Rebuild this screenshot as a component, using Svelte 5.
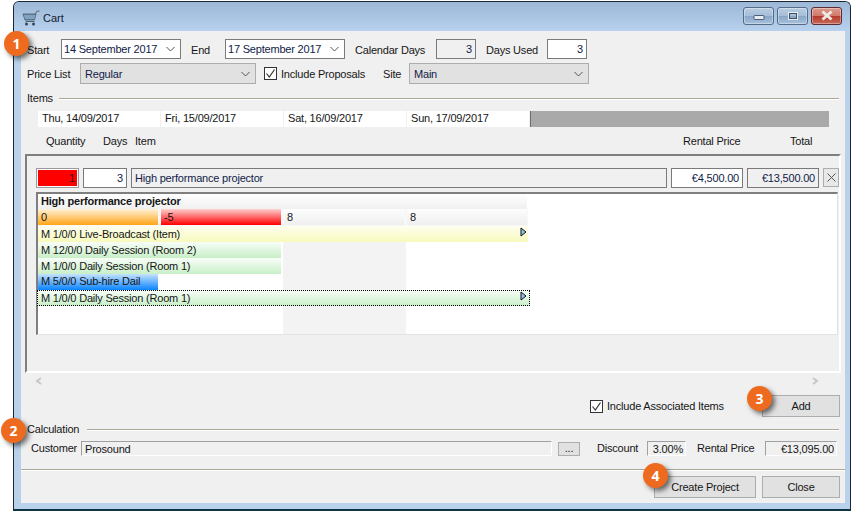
<script>
  const days = ["Thu, 14/09/2017", "Fri, 15/09/2017", "Sat, 16/09/2017", "Sun, 17/09/2017"];
  const totals = [
    { text: "0", cls: "orange" },
    { text: "-5", cls: "red" },
    { text: "8", cls: "plain" },
    { text: "8", cls: "plain" },
  ];
  const bookings = [
    { text: "M 1/0/0 Live-Broadcast (Item)", cls: "yellow long", more: true },
    { text: "M 12/0/0 Daily Session (Room 2)", cls: "green two" },
    { text: "M 1/0/0 Daily Session (Room 1)", cls: "green two" },
    { text: "M  5/0/0 Sub-hire Dail", cls: "blue one" },
    { text: "M 1/0/0 Daily Session (Room 1)", cls: "green long focus", more: true },
  ];
  const badges = [
    { n: 1, cls: "b1" },
    { n: 2, cls: "b2" },
    { n: 3, cls: "b3" },
    { n: 4, cls: "b4" },
  ];
</script>

<div class="window">
  <div class="titlebar">
    <svg class="cart" width="18" height="16" viewBox="0 0 18 16">
      <path d="M13 4 L15 1.5 L17.5 0.8" fill="none" stroke="#6a7680" stroke-width="1.2" />
      <path d="M1 4 H14 L12.5 10 H3 Z" fill="#5f87ad" stroke="#4a5a68" stroke-width="0.8" />
      <path d="M2 6 H13.5 M2.6 8 H13" stroke="#c4d4e2" stroke-width="0.7" />
      <path d="M3.5 11.5 H12.5" stroke="#55606a" stroke-width="1" />
      <circle cx="4.5" cy="14" r="1.5" fill="#2d4860" />
      <circle cx="11.5" cy="14" r="1.5" fill="#2d4860" />
    </svg>
    <span class="title">Cart</span>
    <div class="controls">
      <div class="ctl">
        <svg width="12" height="8" viewBox="0 0 12 8"><rect x="1" y="3.5" width="10" height="4" rx="0.5" fill="#e8edf3" stroke="#4c5f78" /></svg>
      </div>
      <div class="ctl mx">
        <svg width="12" height="10" viewBox="0 0 12 10"><rect x="1.5" y="1.5" width="9" height="7" fill="none" stroke="#e8edf3" stroke-width="1" /><rect x="2.5" y="2.5" width="7" height="5" fill="none" stroke="#3e5068" stroke-width="1" /></svg>
      </div>
      <div class="ctl close">
        <svg width="14" height="11" viewBox="0 0 14 11"><path d="M2.5 1.5 L11.5 9.5 M11.5 1.5 L2.5 9.5" stroke="#f2e9e6" stroke-width="3" /></svg>
      </div>
    </div>
  </div>

  <div class="client">
    <div class="row r1">
      <span class="w-start">Start</span>
      <div class="field combo white w120">14 September 2017<svg class="chev" width="9" height="6" viewBox="0 0 9 6"><path d="M0.5 1 L4.5 5 L8.5 1" fill="none" stroke="#555" /></svg></div>
      <span class="ml10 w-end">End</span>
      <div class="field combo white w120">17 September 2017<svg class="chev" width="9" height="6" viewBox="0 0 9 6"><path d="M0.5 1 L4.5 5 L8.5 1" fill="none" stroke="#555" /></svg></div>
      <span class="ml10 w-cal">Calendar Days</span>
      <div class="field num w40">3</div>
      <span class="ml10 w-used">Days Used</span>
      <div class="field num white w40">3</div>
    </div>

    <div class="row r2">
      <span class="w-price">Price List</span>
      <div class="field combo flat w176">Regular<svg class="chev" width="9" height="6" viewBox="0 0 9 6"><path d="M0.5 1 L4.5 5 L8.5 1" fill="none" stroke="#555" /></svg></div>
      <div class="check ml8"><svg width="11" height="11" viewBox="0 0 11 11"><path d="M1.5 5.5 L4.3 9 L9.5 1.5" fill="none" stroke="#333" stroke-width="1.2" /></svg></div>
      <span class="inc">Include Proposals</span>
      <span class="w-site">Site</span>
      <div class="field combo flat w180">Main<svg class="chev" width="9" height="6" viewBox="0 0 9 6"><path d="M0.5 1 L4.5 5 L8.5 1" fill="none" stroke="#555" /></svg></div>
    </div>

    <div class="row group items-h">
      <span class="w-items">Items</span>
      <div class="rule"></div>
    </div>

    <div class="strip">
      {#each days as d}
        <div class="day">{d}</div>
      {/each}
      <div class="fill"></div>
    </div>

    <div class="row heads">
      <span class="h-qty">Quantity</span>
      <span class="h-days">Days</span>
      <span class="h-item">Item</span>
      <span class="h-rent">Rental Price</span>
      <span>Total</span>
    </div>

    <div class="panel">
      <div class="line">
        <div class="field num qty">1</div>
        <div class="field num white days">3</div>
        <div class="field desc">High performance projector</div>
        <div class="field num white price">€4,500.00</div>
        <div class="field num total">€13,500.00</div>
        <div class="del">
          <svg width="9" height="9" viewBox="0 0 9 9"><path d="M0.5 0.5 L8.5 8.5 M8.5 0.5 L0.5 8.5" stroke="#555" /></svg>
        </div>
      </div>

      <div class="list">
        <div class="name">High performance projector</div>
        <div class="cells">
          {#each totals as t}
            <div class="cell {t.cls}">{t.text}</div>
          {/each}
        </div>
        {#each bookings as b}
          <div class="booking {b.cls}">
            <span>{b.text}</span>
            {#if b.more}
              <svg class="more" width="7" height="10" viewBox="0 0 7 10"><path d="M1 1 L6 5 L1 9 Z" fill="#8fc0f0" stroke="#111" /></svg>
            {/if}
          </div>
        {/each}
      </div>
    </div>

    <div class="scroll">
      <svg width="8" height="8" viewBox="0 0 8 8"><path d="M6 1 L2 4 L6 7" fill="none" stroke="#c6c6c6" stroke-width="2" /></svg>
      <svg width="8" height="8" viewBox="0 0 8 8"><path d="M2 1 L6 4 L2 7" fill="none" stroke="#c6c6c6" stroke-width="2" /></svg>
    </div>

    <div class="row assoc">
      <div class="check"><svg width="11" height="11" viewBox="0 0 11 11"><path d="M1.5 5.5 L4.3 9 L9.5 1.5" fill="none" stroke="#333" stroke-width="1.2" /></svg></div>
      <span class="inc2">Include Associated Items</span>
      <div class="btn add">Add</div>
    </div>

    <div class="row group calc-h">
      <span class="w-calc">Calculation</span>
      <div class="rule"></div>
    </div>

    <div class="row calc">
      <span class="w-cust">Customer</span>
      <div class="sunken cust">Prosound</div>
      <div class="btn dots">...</div>
      <span class="w-disc">Discount</span>
      <div class="sunken right disc">3.00%</div>
      <span class="w-rent">Rental Price</span>
      <div class="sunken right rent">€13,095.00</div>
    </div>

    <div class="sep"></div>

    <div class="row foot">
      <div class="btn create">Create Project</div>
      <div class="btn closebtn">Close</div>
    </div>
  </div>

  {#each badges as b}
    <div class="badge {b.cls}">{b.n}</div>
  {/each}
</div>

<style>
  :global(body) {
    margin: 0;
    background: #fff;
    overflow: hidden;
  }

  * {
    box-sizing: border-box;
  }

  .window {
    position: relative;
    width: 838px;
    height: 510px;
    margin: 1px 0 0 13px;
    border: 1px solid #1c2530;
    border-bottom: 2px solid #10343f;
    border-radius: 6px 6px 0 0;
    background: #b9d1ea;
    padding: 0 5px 6px 7px;
    font: 11px "Liberation Sans", Arial, sans-serif;
    letter-spacing: -0.2px;
    color: #161616;
    display: flex;
    flex-direction: column;
  }

  .titlebar {
    height: 29px;
    flex: none;
    margin: 0 -5px 0 -7px;
    padding: 0 8px 0 8px;
    border-radius: 5px 5px 0 0;
    background: linear-gradient(#9cb8d6, #b7d1ee);
    display: flex;
    align-items: center;
  }

  .cart {
    margin-top: 2px;
  }

  .title {
    margin-left: 3px;
    margin-top: 2px;
    font-size: 11px;
    letter-spacing: 0;
    color: #10202e;
  }

  .controls {
    margin-left: auto;
    margin-top: -2px;
    display: flex;
    gap: 3px;
  }

  .ctl {
    width: 31px;
    height: 18px;
    border: 1px solid #566b84;
    border-radius: 3px;
    background: linear-gradient(#b9cde2 0%, #a5bdd8 50%, #8aa6c6 52%, #a8c2de 100%);
    box-shadow: inset 0 0 0 1px rgba(255, 255, 255, 0.35);
    display: flex;
    align-items: center;
    justify-content: center;
  }

  .ctl.close {
    border-color: #5e2a36;
    background: linear-gradient(#dc9a8c 0%, #cf7b6a 48%, #b53a2c 52%, #c86a58 100%);
  }

  .client {
    flex: 1;
    background: #f0f0f0;
    padding: 0 6px;
    display: flex;
    flex-direction: column;
    min-height: 0;
  }

  .row {
    display: flex;
    align-items: center;
    flex: none;
  }

  .r1 {
    margin-top: 8px;
    height: 20px;
  }

  .r1 > span {
    padding-top: 1px;
  }

  .r2 {
    margin-top: 4px;
    height: 21px;
  }

  .w-start { width: 34px; }
  .w-end { width: 34px; }
  .w-cal { width: 81px; }
  .w-used { width: 61px; }
  .w-price { width: 53px; }
  .w-site { width: 26px; }
  .w-items { width: 32px; }
  .w-calc { width: 60px; }
  .ml10 { margin-left: 10px; }
  .ml8 { margin-left: 8px; }
  .w40 { width: 40px; }
  .w120 { width: 120px; }
  .w176 { width: 176px; }
  .w180 { width: 180px; }

  .field {
    height: 20px;
    border: 1px solid #7a7a7a;
    background: #f0f0f0;
    color: #101c48;
    padding: 0 3px;
    display: flex;
    align-items: center;
    white-space: nowrap;
  }

  .field.white {
    background: #fff;
  }

  .field.num {
    justify-content: flex-end;
  }

  .combo {
    padding-left: 2px;
    justify-content: space-between;
    padding-right: 5px;
  }

  .flat {
    height: 21px;
    background: #e1e1e1;
    border-color: #adadad;
    padding-left: 4px;
  }

  .check {
    width: 13px;
    height: 13px;
    border: 1px solid #333;
    background: #fff;
    display: flex;
    align-items: center;
    justify-content: center;
    flex: none;
  }

  .inc {
    margin-left: 4px;
    width: 102px;
  }

  .group {
    height: 14px;
  }

  .items-h {
    margin-top: 7px;
  }

  .rule {
    flex: 1;
    height: 2px;
    background: #aca899;
    border-bottom: 1px solid #fff;
    margin-top: 1px;
  }

  .strip {
    display: flex;
    flex: none;
    margin: 6px 10px 0 11px;
    height: 16px;
  }

  .day {
    width: 122px;
    margin-right: 1px;
    background: #fff;
    padding-left: 4px;
    line-height: 15px;
    flex: none;
  }

  .fill {
    flex: 1;
    background: #a9a9a9;
    border-left: 1px solid #6e6e6e;
  }

  .heads {
    margin: 6px 0 0 19px;
    height: 16px;
  }

  .h-qty { width: 57px; }
  .h-days { width: 32px; }
  .h-item { width: 548px; }
  .h-rent { width: 107px; }

  .panel {
    margin: 5px 0 0 -2px;
    width: 816px;
    height: 219px;
    flex: none;
    border-top: 2px solid #7f7f7f;
    border-left: 2px solid #7f7f7f;
    border-right: 2px solid #fff;
    border-bottom: 2px solid #fff;
    padding: 12px 0 0 9px;
  }

  .line {
    display: flex;
    height: 20px;
    gap: 4px;
  }

  .qty {
    width: 43px;
    background: #f00;
    border: 1px solid #9a9a9a;
    box-shadow: inset 0 0 0 1px #fff;
    color: #4a0a10;
  }

  .days { width: 44px; }
  .desc { width: 536px; }
  .price { width: 72px; }
  .total { width: 72px; }

  .del {
    width: 16px;
    height: 19px;
    margin-left: 0;
    border: 1px solid #adadad;
    background: #e8e8e8;
    display: flex;
    align-items: center;
    justify-content: center;
  }

  .list {
    margin-top: 4px;
    width: 802px;
    height: 143px;
    border-top: 2px solid #7f7f7f;
    border-left: 2px solid #7f7f7f;
    border-right: 1px solid #e3e3e3;
    border-bottom: 1px solid #e3e3e3;
    background: linear-gradient(#f3f3f3, #f3f3f3) 245px 48px / 123px 100% no-repeat #fff;
  }

  .name {
    width: 489px;
    height: 15px;
    padding-left: 3px;
    font-weight: bold;
    line-height: 14px;
    background: linear-gradient(#fff, #f0f0f0);
  }

  .cells {
    display: flex;
    gap: 3px;
    height: 17px;
    width: 490px;
    background: #f8f8f8;
  }

  .cell {
    width: 120px;
    height: 16px;
    padding-left: 3px;
    line-height: 16px;
  }

  .orange { background: linear-gradient(#fff2d8, #ffa516); }
  .red { background: linear-gradient(#ffd0d0, #ff0000); }
  .plain { background: linear-gradient(#fdfdfd, #efefef); }

  .booking {
    height: 16px;
    padding-left: 3px;
    line-height: 16px;
    display: flex;
    justify-content: space-between;
    align-items: flex-start;
    white-space: nowrap;
    overflow: hidden;
  }

  .long { width: 490px; }
  .two { width: 243px; }
  .one { width: 120px; line-height: 15px; }

  .yellow { background: linear-gradient(#fffff0, #f7f9bc); }
  .green { background: linear-gradient(#f8fdf8, #c8efc8); }
  .blue { background: linear-gradient(#c4e2ff, #0a84ff); }

  .focus {
    margin-left: -1px;
    width: 493px;
    outline: 1px dotted #000;
    outline-offset: -1px;
    padding-left: 4px;
  }

  .more {
    flex: none;
    margin-top: 1px;
    margin-right: 1px;
  }

  .focus .more {
    margin-right: 3px;
  }

  .scroll {
    height: 16px;
    flex: none;
    padding: 4px 20px 0 8px;
    display: flex;
    justify-content: space-between;
  }

  .assoc {
    margin-top: 6px;
    margin-right: -1px;
    height: 22px;
    padding-left: 563px;
  }

  .inc2 {
    margin-left: 4px;
    width: 155px;
  }

  .btn {
    border: 1px solid #adadad;
    background: #e1e1e1;
    display: flex;
    align-items: center;
    justify-content: center;
    flex: none;
  }

  .add {
    width: 78px;
    height: 22px;
  }

  .calc-h {
    margin-top: 5px;
  }

  .calc {
    margin-top: 5px;
    height: 15px;
  }

  .w-cust {
    width: 50px;
    padding-left: 4px;
    margin-right: 4px;
    margin-top: -1px;
  }

  .sunken {
    height: 15px;
    border-top: 1px solid #a0a0a0;
    border-left: 1px solid #a0a0a0;
    border-right: 1px solid #fff;
    border-bottom: 1px solid #fff;
    display: flex;
    align-items: center;
    padding: 0 2px 0 3px;
    white-space: nowrap;
  }

  .sunken.right {
    justify-content: flex-end;
  }

  .cust { width: 471px; }

  .dots {
    width: 22px;
    height: 14px;
    margin-left: 6px;
    margin-top: 1px;
    padding-bottom: 2px;
  }

  .w-disc {
    width: 50px;
    margin-left: 17px;
    margin-top: -1px;
  }

  .disc { width: 39px; }

  .w-rent {
    width: 68px;
    margin-left: 11px;
    margin-top: -1px;
  }

  .rent { width: 72px; }

  .sep {
    flex: none;
    margin: 13px -6px 0;
    height: 2px;
    background: #aca899;
    border-bottom: 1px solid #fff;
  }

  .foot {
    margin-top: 5px;
    justify-content: flex-end;
    gap: 6px;
    margin-right: -1px;
  }

  .create {
    width: 102px;
    height: 22px;
  }

  .closebtn {
    width: 78px;
    height: 22px;
  }

  .badge {
    position: absolute;
    width: 25px;
    height: 25px;
    border-radius: 50%;
    background: #ee6a1f;
    color: #fff;
    font: bold 14px "Open Sans", "Liberation Sans", sans-serif;
    letter-spacing: 0;
    display: flex;
    align-items: center;
    justify-content: center;
    box-shadow: 3px 3px 5px rgba(0, 0, 0, 0.55);
  }

  .b1 { left: -10px; top: 29px; }
  .b2 { left: -13px; top: 416px; }
  .b3 { left: 733px; top: 384px; }
  .b4 { left: 629px; top: 461px; }
</style>
